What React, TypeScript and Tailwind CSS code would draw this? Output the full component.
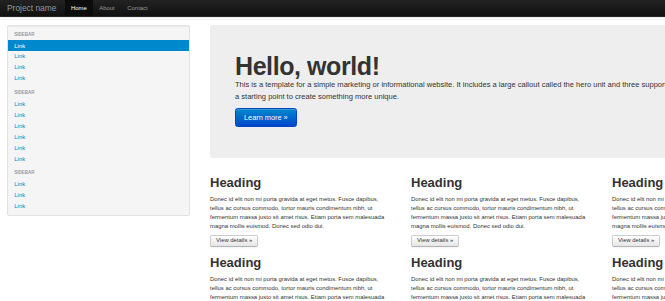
const navLinks = [
  { label: "Home", active: true },
  { label: "About", active: false },
  { label: "Contact", active: false },
];

const sidebarGroups = [
  { header: "Sidebar", links: 4, activeIndex: 0 },
  { header: "Sidebar", links: 6, activeIndex: -1 },
  { header: "Sidebar", links: 3, activeIndex: -1 },
];

const bodyLines = [
  "Donec id elit non mi porta gravida at eget metus. Fusce dapibus,",
  "tellus ac cursus commodo, tortor mauris condimentum nibh, ut",
  "fermentum massa justo sit amet risus. Etiam porta sem malesuada",
  "magna mollis euismod. Donec sed odio dui.",
];

function Navbar() {
  return (
    <div className="flex h-[17px] w-[808px] items-stretch border-b border-[#252525] bg-gradient-to-b from-[#222222] to-[#111111] pl-[7px] shadow-[0_1px_4px_rgba(0,0,0,0.1)]">
      <span className="flex items-center pr-[8.4px] text-[8.4px] text-[#999999]">Project name</span>
      <ul className="flex">
        {navLinks.map((l) => (
          <li key={l.label}>
            <a
              className={
                l.active
                  ? "flex h-full items-center bg-[#0e0e0e] px-[6.3px] text-[5.9px] text-white shadow-[inset_0_2px_6px_rgba(0,0,0,0.3)]"
                  : "flex h-full items-center px-[6.3px] text-[5.9px] text-[#999999]"
              }
            >
              {l.label}
            </a>
          </li>
        ))}
      </ul>
    </div>
  );
}

function Sidebar() {
  return (
    <aside className="w-[183px] shrink-0 self-start rounded-[2px] border border-[#e3e3e3] bg-[#f5f5f5] py-[3.8px] shadow-[inset_0_1px_1px_rgba(0,0,0,0.05)]">
      <ul className="flex flex-col">
        {sidebarGroups.map((g, gi) => (
          <li key={gi} className={gi > 0 ? "mt-[3.8px]" : ""}>
            <div className="px-[6.3px] py-[1.3px] text-[4.5px] font-bold uppercase leading-[8.4px] text-[#999999]">
              {g.header}
            </div>
            {Array.from({ length: g.links }).map((_, i) => (
              <a
                key={i}
                className={
                  i === g.activeIndex
                    ? "block bg-[#0088cc] px-[6.3px] py-[1.25px] text-[5.9px] leading-[8.4px] text-white"
                    : "block px-[6.3px] py-[1.25px] text-[5.9px] leading-[8.4px] text-[#0088cc]"
                }
              >
                Link
              </a>
            ))}
          </li>
        ))}
      </ul>
    </aside>
  );
}

function Hero() {
  return (
    <div className="rounded-[2.5px] bg-[#eeeeee] px-[25px] pt-[25px] pb-[27px]">
      <h1 className="mt-[4.2px] text-[25px] font-bold leading-[25px] tracking-[-0.42px]">Hello, world!</h1>
      <p className="mb-[4.2px] whitespace-nowrap text-[7.55px] leading-[12.6px]">
        This is a template for a simple marketing or informational website. It includes a large callout called the hero unit and three supporting pieces of content. Use it as
        <br />
        a starting point to create something more unique.
      </p>
      <p className="mb-[4.2px] flex">
        <a className="flex h-[19px] items-center rounded-[2.5px] border border-[#0044cc] bg-gradient-to-b from-[#0088cc] to-[#0044cc] px-[8px] text-[7.35px] text-white shadow-[inset_0_1px_0_rgba(255,255,255,0.2)]">
          Learn more »
        </a>
      </p>
    </div>
  );
}

function Column() {
  return (
    <div>
      <h2 className="my-[4px] text-[13px] font-bold leading-[16px]">Heading</h2>
      <p className="mb-[4px] whitespace-nowrap text-[5.9px] leading-[9px]">
        {bodyLines.map((line, i) => (
          <span key={i} className="block">
            {line}
          </span>
        ))}
      </p>
      <p className="mb-[4px] flex">
        <a className="flex h-[12px] items-center rounded-[1.7px] border border-[#cccccc] border-b-[#b3b3b3] bg-gradient-to-b from-white to-[#e6e6e6] px-[5px] text-[5.9px] text-[#333333] shadow-[0_1px_2px_rgba(0,0,0,0.05)]">
          View details »
        </a>
      </p>
    </div>
  );
}

export default function App() {
  return (
    <div className="h-[301px] w-[665px] overflow-hidden bg-white font-['Liberation_Sans',Arial,sans-serif] text-[#333333]">
      <Navbar />
      <div className="flex w-[808px] gap-[20px] px-[7px] pt-[7.5px]">
        <Sidebar />
        <main className="w-[590px] shrink-0">
          <Hero />
          <div className="mt-[12.6px] grid grid-cols-[186px_186px_186px] gap-x-[15px]">
            {Array.from({ length: 6 }).map((_, i) => (
              <Column key={i} />
            ))}
          </div>
        </main>
      </div>
    </div>
  );
}
